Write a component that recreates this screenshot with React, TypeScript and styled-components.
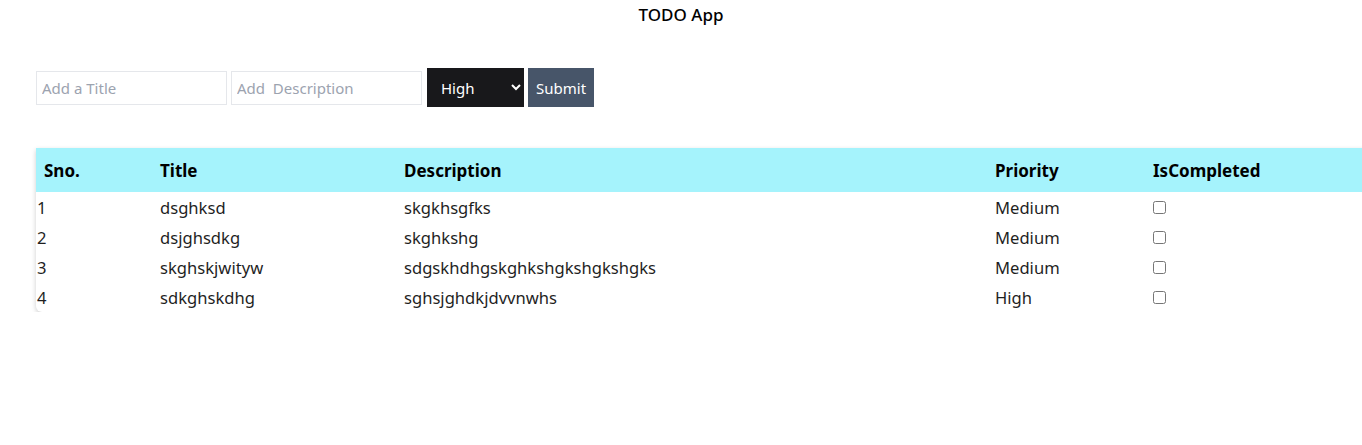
import React, { useState } from "react";
import styled, { createGlobalStyle } from "styled-components";

const GlobalStyle = createGlobalStyle`
  body {
    margin: 0;
    font-family: "Noto Sans", "Open Sans", sans-serif;
    color: #000;
    background: #fff;
    overflow: hidden;
  }
`;

const Page = styled.div`
  display: flex;
  flex-direction: column;
`;

const Heading = styled.h1`
  margin: 0;
  padding-top: 4px;
  text-align: center;
  font-size: 17px;
  font-weight: 500;
  line-height: 22px;
`;

const Form = styled.form`
  display: flex;
  align-items: center;
  gap: 4px;
  margin: 42px 0 0 36px;
`;

const TextInput = styled.input`
  box-sizing: border-box;
  width: 191px;
  height: 34px;
  border: 1px solid #e5e7eb;
  padding: 0 5px;
  font-family: inherit;
  font-size: 15px;
  outline: none;

  &::placeholder {
    color: #9ca3af;
  }
`;

const Select = styled.select`
  box-sizing: border-box;
  width: 97px;
  height: 39px;
  margin-left: 1px;
  border: none;
  background: #18181b;
  color: #fff;
  font-family: inherit;
  font-size: 15px;
  padding: 0 6px 0 10px;
`;

const Button = styled.button`
  height: 39px;
  padding: 0 8px;
  border: none;
  background: #475569;
  color: #fff;
  font-family: inherit;
  font-size: 15px;
`;

const Table = styled.div`
  margin: 41px 0 0 36px;
  width: 1360px;
  box-shadow: 0 2px 5px rgba(0, 0, 0, 0.2);
  border-radius: 0 0 6px 6px;
`;

const Row = styled.div<{ $head?: boolean }>`
  display: grid;
  grid-template-columns: 124px 244px 591px 158px 1fr;
  align-items: center;
  height: ${({ $head }) => ($head ? "44px" : "30px")};
  background: ${({ $head }) => ($head ? "#a5f3fc" : "transparent")};
  font-size: ${({ $head }) => ($head ? "17px" : "16.6px")};
  font-weight: ${({ $head }) => ($head ? 700 : 400)};
  color: ${({ $head }) => ($head ? "#000" : "#1f1f1f")};

  & > *:first-child {
    padding-left: ${({ $head }) => ($head ? "8px" : "1px")};
  }
`;

const Cell = styled.div`
  white-space: nowrap;
`;

const Check = styled.input`
  margin: 0;
  width: 13px;
  height: 13px;
`;

type Todo = { title: string; desc: string; priority: string; done: boolean };

const initial: Todo[] = [
  { title: "dsghksd", desc: "skgkhsgfks", priority: "Medium", done: false },
  { title: "dsjghsdkg", desc: "skghkshg", priority: "Medium", done: false },
  { title: "skghskjwityw", desc: "sdgskhdhgskghkshgkshgkshgks", priority: "Medium", done: false },
  { title: "sdkghskdhg", desc: "sghsjghdkjdvvnwhs", priority: "High", done: false },
];

export default function App() {
  const [todos, setTodos] = useState(initial);
  const [priority, setPriority] = useState("High");

  const toggle = (i: number) =>
    setTodos(todos.map((t, j) => (j === i ? { ...t, done: !t.done } : t)));

  return (
    <Page>
      <GlobalStyle />
      <Heading>TODO App</Heading>
      <Form onSubmit={(e) => e.preventDefault()}>
        <TextInput placeholder="Add a Title" />
        <TextInput placeholder="Add  Description" />
        <Select value={priority} onChange={(e) => setPriority(e.target.value)}>
          <option>High</option>
          <option>Medium</option>
          <option>Low</option>
        </Select>
        <Button type="submit">Submit</Button>
      </Form>
      <Table>
        <Row $head>
          <Cell>Sno.</Cell>
          <Cell>Title</Cell>
          <Cell>Description</Cell>
          <Cell>Priority</Cell>
          <Cell>IsCompleted</Cell>
        </Row>
        {todos.map((t, i) => (
          <Row key={i}>
            <Cell>{i + 1}</Cell>
            <Cell>{t.title}</Cell>
            <Cell>{t.desc}</Cell>
            <Cell>{t.priority}</Cell>
            <Cell>
              <Check type="checkbox" checked={t.done} onChange={() => toggle(i)} />
            </Cell>
          </Row>
        ))}
      </Table>
    </Page>
  );
}
